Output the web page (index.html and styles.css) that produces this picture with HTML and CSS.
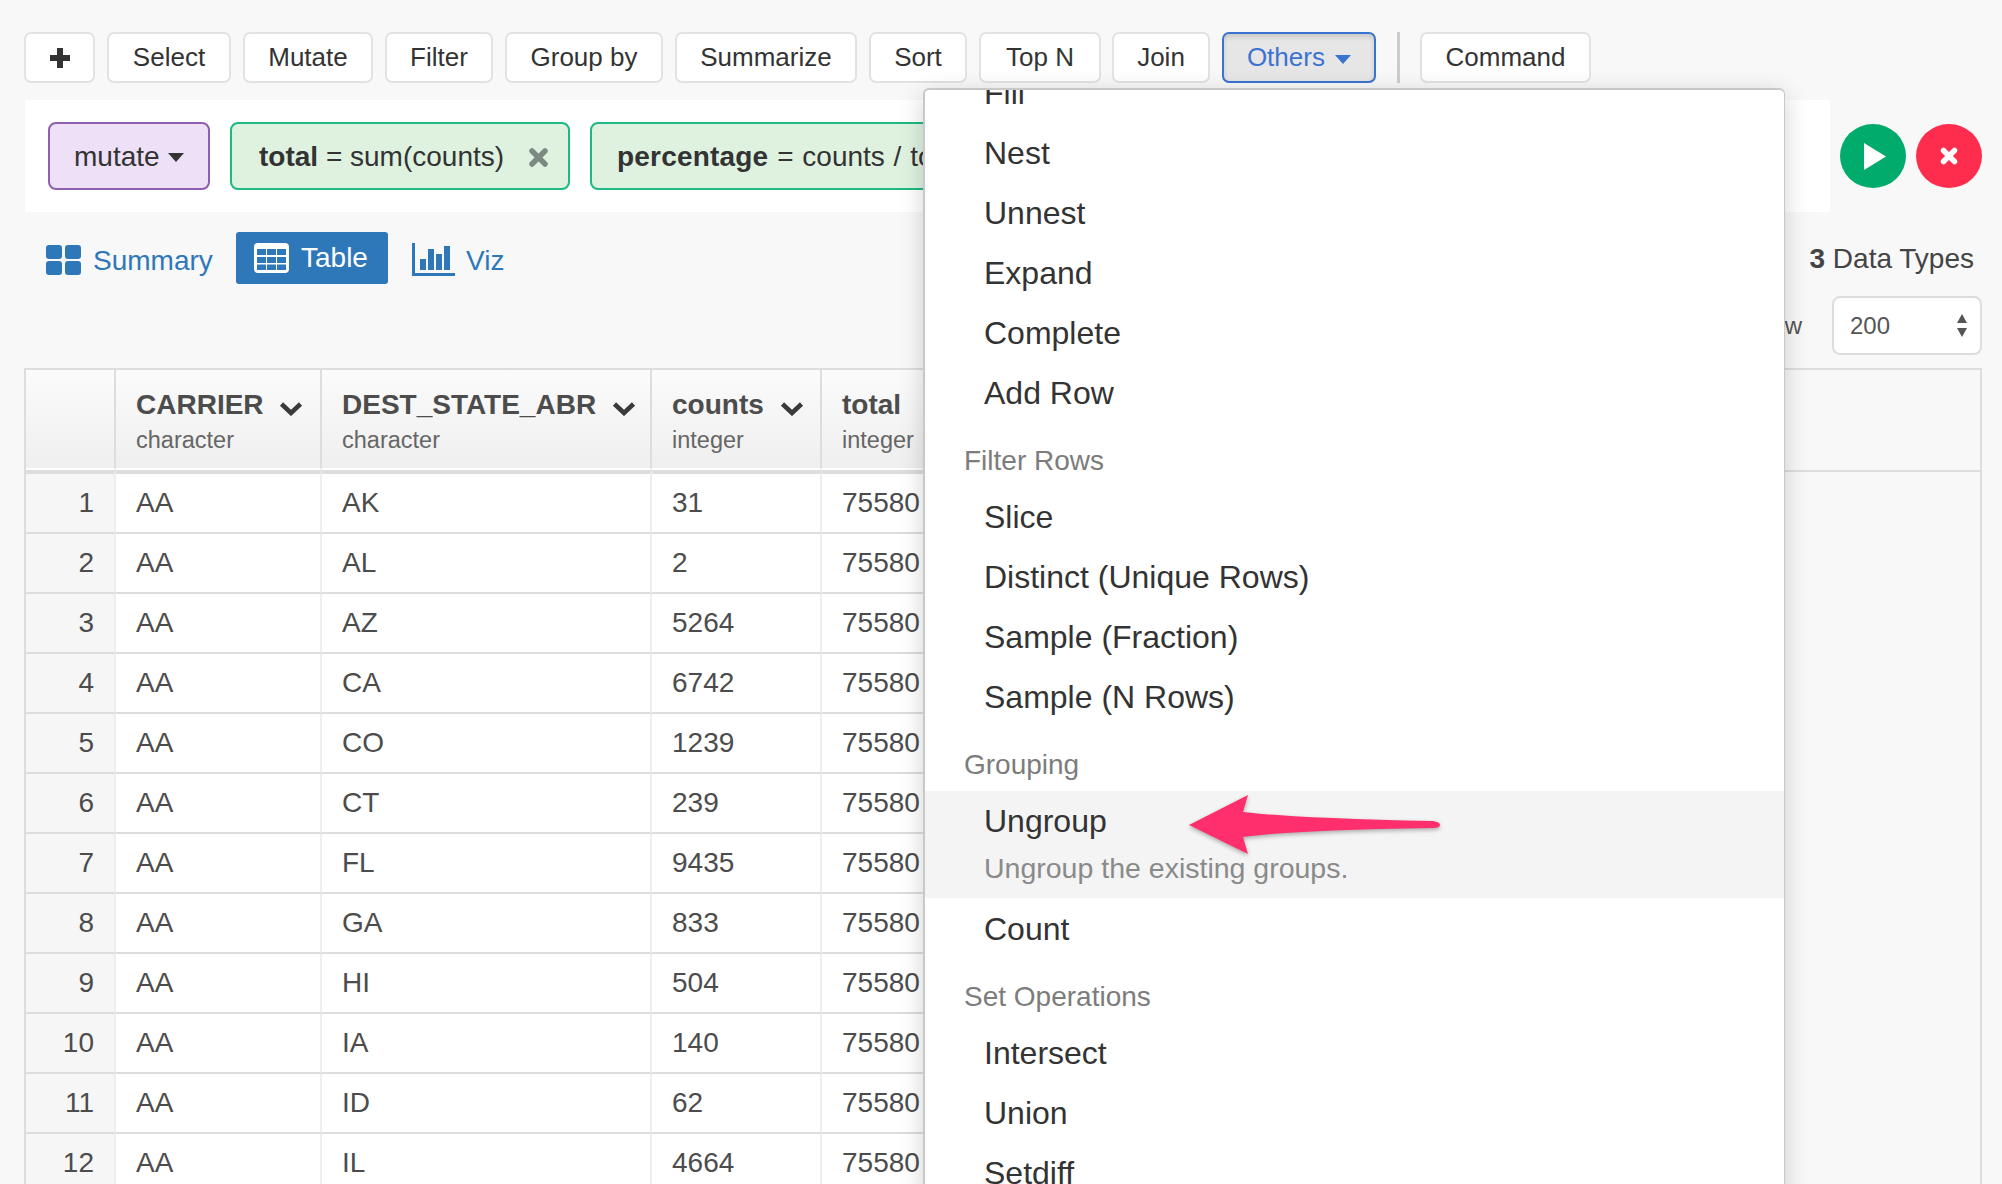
FILE: index.html
```html
<!DOCTYPE html>
<html lang="en">
<head>
    <meta charset="UTF-8">
    <meta name="viewport" content="width=device-width, initial-scale=1.0">
    <title>Data Wrangling</title>
    <link rel="stylesheet" href="styles.css">
</head>
<body>
    <div class="toolbar">
        <button class="tool tool-plus">
            <svg width="20" height="20" viewBox="0 0 20 20"><path d="M7 0h6v7h7v6h-7v7H7v-7H0V7h7z" fill="#333"/></svg>
        </button>
        <button class="tool tool-select">Select</button>
        <button class="tool tool-mutate">Mutate</button>
        <button class="tool tool-filter">Filter</button>
        <button class="tool tool-group">Group by</button>
        <button class="tool tool-summarize">Summarize</button>
        <button class="tool tool-sort">Sort</button>
        <button class="tool tool-top">Top N</button>
        <button class="tool tool-join">Join</button>
        <button class="tool tool-open">Others <span class="caret caret-blue"></span></button>
        <span class="tool-sep"></span>
        <button class="tool tool-command">Command</button>
    </div>

    <div class="step-row">
        <div class="step-panel">
            <div class="chip chip-verb">mutate <span class="caret caret-dark"></span></div>
            <div class="chip chip-arg">
                <b>total</b>&nbsp;= sum(counts)
                <svg class="chip-x" width="19" height="19" viewBox="0 0 19 19"><path d="M3 3l13 13M16 3L3 16" stroke="#7d8a84" stroke-width="5.5" stroke-linecap="round"/></svg>
            </div>
            <div class="chip chip-arg chip-long"><b>percentage</b>&nbsp;= counts / total * 100</div>
        </div>
        <button class="round round-run">
            <svg width="22" height="27" viewBox="0 0 22 27"><path d="M0 0l22 13.5L0 27z" fill="#fff"/></svg>
        </button>
        <button class="round round-cancel">
            <svg width="18" height="18" viewBox="0 0 18 18"><path d="M3.5 3.5l11 11M14.500 3.500l-11 11" stroke="#fff" stroke-width="5.500" stroke-linecap="round"/></svg>
        </button>
    </div>

    <div class="view-row">
        <div class="tabs">
            <a class="tab">
                <svg width="35" height="30" viewBox="0 0 35 30"><g fill="#2e77b8"><rect width="16" height="14" rx="3"/><rect x="19" width="16" height="14" rx="3"/><rect y="16" width="16" height="14" rx="3"/><rect x="19" y="16" width="16" height="14" rx="3"/></g></svg>
                <span>Summary</span>
            </a>
            <a class="tab tab-active">
                <svg width="35" height="30" viewBox="0 0 35 30"><rect width="35" height="30" rx="4" fill="#fff"/><g fill="#2e77b8"><rect x="3" y="6" width="9" height="6"/><rect x="13" y="6" width="9" height="6"/><rect x="23" y="6" width="9" height="6"/><rect x="3" y="14" width="9" height="6"/><rect x="13" y="14" width="9" height="6"/><rect x="23" y="14" width="9" height="6"/><rect x="3" y="21.500" width="9" height="5.500"/><rect x="13" y="21.500" width="9" height="5.500"/><rect x="23" y="21.500" width="9" height="5.500"/></g></svg>
                <span>Table</span>
            </a>
            <a class="tab tab-viz">
                <svg width="43" height="33" viewBox="0 0 43 33"><g fill="#2e77b8"><rect width="3" height="33"/><rect y="30" width="43" height="3"/><rect x="8" y="16" width="6" height="11"/><rect x="16" y="6" width="6" height="21"/><rect x="24" y="11" width="6" height="16"/><rect x="32" y="3" width="6" height="24"/></g></svg>
                <span>Viz</span>
            </a>
        </div>
        <div class="data-types"><b>3</b> Data Types</div>
    </div>

    <div class="rows-row">
        <span class="rows-label">Show</span>
        <div class="rows-select">
            200
            <svg width="12" height="24" viewBox="0 0 12 24"><path d="M6 0l5 9H1zM1 14h10l-5 9z" fill="#555"/></svg>
        </div>
    </div>

    <div class="table-wrap">
        <table class="data-table">
            <colgroup>
                <col class="col-idx"><col class="col-carrier"><col class="col-state"><col class="col-num"><col class="col-num"><col>
            </colgroup>
            <thead>
                <tr>
                    <th></th>
                    <th><div class="col-name">CARRIER <svg class="chev" width="24" height="15" viewBox="0 0 24 15"><path d="M2.500 3l9.500 9 9.500-9" fill="none" stroke="#3a3a3a" stroke-width="4.500"/></svg></div><div class="col-type">character</div></th>
                    <th><div class="col-name">DEST_STATE_ABR <svg class="chev" width="24" height="15" viewBox="0 0 24 15"><path d="M2.500 3l9.500 9 9.500-9" fill="none" stroke="#3a3a3a" stroke-width="4.500"/></svg></div><div class="col-type">character</div></th>
                    <th><div class="col-name">counts <svg class="chev" width="24" height="15" viewBox="0 0 24 15"><path d="M2.500 3l9.500 9 9.500-9" fill="none" stroke="#3a3a3a" stroke-width="4.500"/></svg></div><div class="col-type">integer</div></th>
                    <th><div class="col-name">total</div><div class="col-type">integer</div></th>
                    <th class="col-rest"></th>
                </tr>
            </thead>
            <tbody>
                <tr><td class="idx">1</td><td>AA</td><td>AK</td><td>31</td><td>75580</td><td class="col-rest"></td></tr>
                <tr><td class="idx">2</td><td>AA</td><td>AL</td><td>2</td><td>75580</td><td class="col-rest"></td></tr>
                <tr><td class="idx">3</td><td>AA</td><td>AZ</td><td>5264</td><td>75580</td><td class="col-rest"></td></tr>
                <tr><td class="idx">4</td><td>AA</td><td>CA</td><td>6742</td><td>75580</td><td class="col-rest"></td></tr>
                <tr><td class="idx">5</td><td>AA</td><td>CO</td><td>1239</td><td>75580</td><td class="col-rest"></td></tr>
                <tr><td class="idx">6</td><td>AA</td><td>CT</td><td>239</td><td>75580</td><td class="col-rest"></td></tr>
                <tr><td class="idx">7</td><td>AA</td><td>FL</td><td>9435</td><td>75580</td><td class="col-rest"></td></tr>
                <tr><td class="idx">8</td><td>AA</td><td>GA</td><td>833</td><td>75580</td><td class="col-rest"></td></tr>
                <tr><td class="idx">9</td><td>AA</td><td>HI</td><td>504</td><td>75580</td><td class="col-rest"></td></tr>
                <tr><td class="idx">10</td><td>AA</td><td>IA</td><td>140</td><td>75580</td><td class="col-rest"></td></tr>
                <tr><td class="idx">11</td><td>AA</td><td>ID</td><td>62</td><td>75580</td><td class="col-rest"></td></tr>
                <tr><td class="idx">12</td><td>AA</td><td>IL</td><td>4664</td><td>75580</td><td class="col-rest"></td></tr>
            </tbody>
        </table>
    </div>

    <div class="menu">
        <ul class="menu-list">
            <li class="menu-item">Fill</li>
            <li class="menu-item">Nest</li>
            <li class="menu-item">Unnest</li>
            <li class="menu-item">Expand</li>
            <li class="menu-item">Complete</li>
            <li class="menu-item">Add Row</li>
            <li class="menu-head">Filter Rows</li>
            <li class="menu-item">Slice</li>
            <li class="menu-item">Distinct (Unique Rows)</li>
            <li class="menu-item">Sample (Fraction)</li>
            <li class="menu-item">Sample (N Rows)</li>
            <li class="menu-head">Grouping</li>
            <li class="menu-item menu-hover">Ungroup<div class="menu-desc">Ungroup the existing groups.</div></li>
            <li class="menu-item">Count</li>
            <li class="menu-head">Set Operations</li>
            <li class="menu-item">Intersect</li>
            <li class="menu-item">Union</li>
            <li class="menu-item">Setdiff</li>
        </ul>
    </div>

    <svg class="arrow" width="270" height="80" viewBox="0 0 270 80">
        <path d="M4 40L63 10L58 27Q110 33 248 36Q255 37 255 40Q255 43 248 43Q110 45 58 52L63 69z" fill="#ff2f6e"/>
    </svg>
</body>
</html>
```

FILE: styles.css
```css
* {
    box-sizing: border-box;
}
html, body {
    height: 100%;
}
body {
    margin: 0;
    padding: 32px 20px 0 25px;
    background-color: #f8f8f8;
    color: #333;
    font-family: 'Liberation Sans', Arial, sans-serif;
    font-size: 28px;
    overflow: hidden;
    position: relative;
}

/* top toolbar */
.toolbar {
    display: flex;
    gap: 12px;
    align-items: stretch;
    height: 51px;
    margin-left: -1px;
}
.tool {
    padding: 0;
    background-color: #fff;
    border: 2px solid #e2e2e2;
    border-radius: 7px;
    color: #333;
    font-family: inherit;
    font-size: 26px;
}
.tool-plus {
    width: 71px;
    display: flex;
    align-items: center;
    justify-content: center;
}
.tool-select { width: 124px; }
.tool-mutate { width: 130px; }
.tool-filter { width: 108px; }
.tool-group { width: 158px; }
.tool-summarize { width: 182px; }
.tool-sort { width: 98px; }
.tool-top { width: 122px; }
.tool-join { width: 98px; margin-left: -1px; }
.tool-command { width: 171px; }
.tool-open {
    width: 154px;
    background-color: #e6e6e6;
    border-color: #3b73d1;
    color: #3b73d1;
    box-shadow: inset 0 3px 5px rgba(0, 0, 0, .125);
}
.tool-sep {
    width: 3px;
    margin: 0 8px 0 9px;
    background-color: #ccc;
}
.caret {
    display: inline-block;
    width: 0;
    height: 0;
    margin-left: 3px;
    vertical-align: middle;
    border-left: 8px solid transparent;
    border-right: 8px solid transparent;
}
.caret-blue {
    border-top: 9px solid #3b73d1;
}
.caret-dark {
    border-top: 9px solid #333;
}

/* step row */
.step-row {
    display: flex;
    align-items: center;
    margin-top: 17px;
}
.step-panel {
    display: flex;
    align-items: center;
    gap: 20px;
    width: 1805px;
    height: 112px;
    padding: 0 23px;
    background-color: #fff;
    overflow: hidden;
    margin-right: 10px;
}
.chip {
    display: flex;
    align-items: center;
    flex: none;
    height: 68px;
    padding-top: 2px;
    border: 2px solid;
    border-radius: 8px;
    white-space: nowrap;
    font-size: 28px;
}
.chip-verb {
    width: 162px;
    padding-left: 24px;
    background-color: #eee0f7;
    border-color: #8e5fb0;
}
.chip-verb .caret {
    margin-left: 8px;
}
.chip-arg {
    padding-left: 27px;
    background-color: #dff2e0;
    border-color: #1db884;
}
.chip-arg:nth-child(2) {
    width: 340px;
}
.chip-x {
    margin-left: 25px;
}
.chip-long {
    padding-left: 25px;
    padding-right: 28px;
    word-spacing: 1px;
}
.chip-long b {
    letter-spacing: .2px;
}
.round {
    width: 66px;
    height: 64px;
    padding: 0;
    border: 0;
    border-radius: 50%;
    display: flex;
    align-items: center;
    justify-content: center;
}
.round-run {
    background-color: #00ab6b;
    margin-right: 10px;
}
.round-run svg {
    margin-left: 3px;
}
.round-cancel {
    background-color: #ff2d4d;
}

/* summary / table / viz */
.view-row {
    display: flex;
    align-items: center;
    justify-content: space-between;
    height: 52px;
    margin-top: 20px;
    padding-right: 8px;
}
.tabs {
    display: flex;
    align-items: center;
}
.tab {
    display: flex;
    align-items: center;
    gap: 12px;
    height: 52px;
    color: #2e77b8;
    padding-left: 21px;
    padding-top: 3px;
    width: 211px;
}
.tab span {
    padding-top: 2px;
}
.tab-active {
    width: 152px;
    padding-top: 0;
    padding-left: 18px;
    background-color: #2e77b8;
    border-radius: 3px;
    color: #fff;
}
.tab-active span {
    padding-top: 0;
}
.tab-viz {
    padding-left: 24px;
    gap: 11px;
}
.data-types {
    color: #444;
    font-size: 28px;
    padding-top: 2px;
}

.rows-row {
    display: flex;
    align-items: center;
    justify-content: flex-end;
    gap: 30px;
    height: 59px;
    margin-top: 12px;
}
.rows-label {
    color: #555;
    font-size: 24px;
}
.rows-select {
    display: flex;
    align-items: center;
    justify-content: space-between;
    width: 150px;
    height: 59px;
    padding: 0 12px 0 16px;
    background-color: #fff;
    border: 2px solid #ddd;
    border-radius: 8px;
    color: #555;
    font-size: 24px;
}

/* table */
.table-wrap {
    margin: 13px 0 0 -1px;
    border: 2px solid #ddd;
    border-bottom: 0;
}
.data-table {
    width: 100%;
    table-layout: fixed;
    border-collapse: separate;
    border-spacing: 0;
    color: #4c4c4c;
}
.col-idx {
    width: 90px;
}
.col-carrier {
    width: 206px;
}
.col-state {
    width: 330px;
}
.col-num {
    width: 170px;
}
th {
    height: 100px;
    padding: 7px 0 0 20px;
    background: linear-gradient(#fbfbfb, #efefef);
    border-right: 2px solid #ddd;
    border-bottom: 2px solid #fff;
    font-weight: normal;
    text-align: left;
    white-space: nowrap;
    vertical-align: top;
}
th.col-rest {
    background: none;
    border-right: 0;
    border-bottom: 0;
}
.col-name {
    margin-top: 12px;
    font-size: 28px;
    font-weight: bold;
    line-height: 32px;
}
.chev {
    margin-left: 8px;
    vertical-align: -2px;
}
.col-type {
    margin-top: 4px;
    font-size: 23.500px;
    line-height: 30px;
    color: #666;
}
td {
    height: 60px;
    padding: 0 0 0 20px;
    background-color: #fff;
    border-right: 2px solid #eee;
    border-bottom: 2px solid #ddd;
    white-space: nowrap;
}
tbody tr:first-child td {
    height: 64px;
    border-top: 4px solid #ddd;
}
td.idx {
    padding: 0 20px 0 0;
    background-color: #f6f6f6;
    text-align: right;
}
td.col-rest {
    background: none;
    border: 0;
}
tbody tr:first-child td.col-rest {
    background: none;
    border: 0;
    border-top: 2px solid #ddd;
}

/* dropdown lying over the page */
.menu {
    position: absolute;
    left: 923px;
    top: 88px;
    width: 862px;
    height: 1200px;
    background-color: #fff;
    border: 2px solid #c8c8c8;
    border-bottom: 0;
    border-right-width: 1px;
    border-radius: 6px 6px 0 0;
    box-shadow: 0 6px 24px rgba(0, 0, 0, .18);
    overflow: hidden;
}
.menu-list {
    list-style: none;
    margin: -27px 0 0;
    padding: 0;
}
.menu-item {
    padding: 11px 0 0 59px;
    height: 60px;
    font-size: 32px;
    line-height: 38px;
    color: #333;
}
.menu-head {
    height: 64px;
    padding: 22px 0 0 39px;
    font-size: 28px;
    line-height: 32px;
    color: #7c7c7c;
}
.menu-hover {
    height: 107px;
    margin-bottom: 1px;
    background-color: #f4f4f4;
}
.menu-desc {
    margin-top: 12px;
    font-size: 28.500px;
    line-height: 32px;
    color: #8a8a8a;
}
.arrow {
    position: absolute;
    left: 1185px;
    top: 785px;
    filter: drop-shadow(0 2px 2px rgba(0, 0, 0, .3));
}
```
